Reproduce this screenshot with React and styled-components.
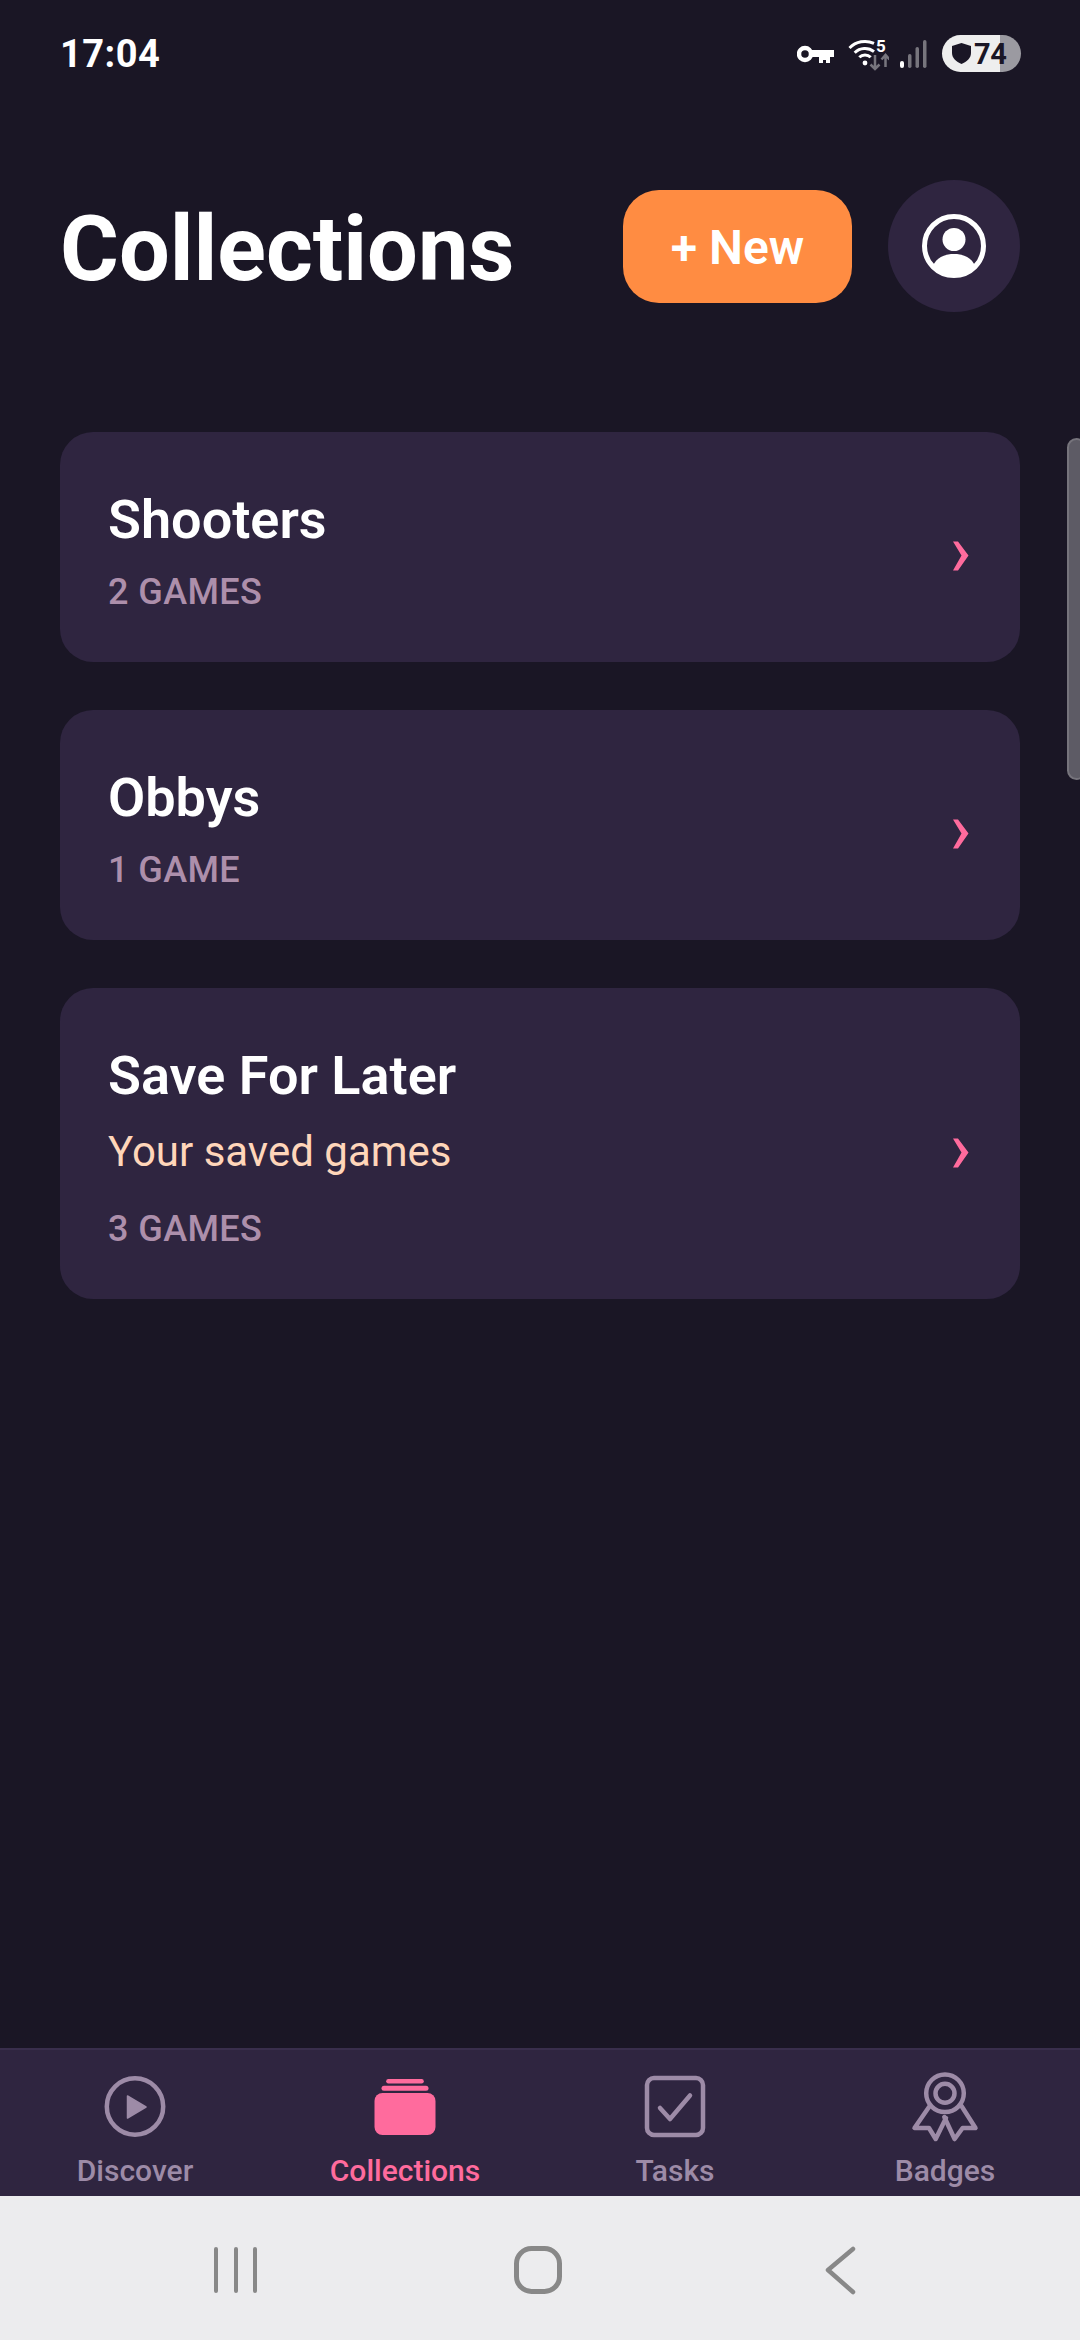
import React from 'react';
import styled, { createGlobalStyle } from 'styled-components';

const Global = createGlobalStyle`
  html, body { margin: 0; padding: 0; background: #1a1625; }
  * { box-sizing: border-box; }
`;

const Page = styled.div`
  position: relative;
  width: 1080px;
  height: 2340px;
  overflow: hidden;
  display: flex;
  flex-direction: column;
  background: #1a1625;
  font-family: Roboto, "Liberation Sans", sans-serif;
  color: #fff;
`;

const StatusBar = styled.div`
  height: 108px;
  padding: 35px 59px 0 60px;
  display: flex;
  justify-content: space-between;
  align-items: flex-start;
`;

const Time = styled.div`
  font-size: 38px;
  line-height: 38px;
  font-weight: 700;
  letter-spacing: 0.5px;
`;

const StatusIcons = styled.div`
  display: flex;
  align-items: center;
  height: 37px;
`;

const StatusIcon = styled.svg`
  display: block;
  flex: none;
  margin-left: ${p => p.$ml || 0}px;
  margin-right: ${p => p.$mr || 0}px;
`;

const Battery = styled.div`
  width: 79px;
  height: 37px;
  margin-left: 15px;
  border-radius: 18.5px;
  background: linear-gradient(to right, #eeeeee 0 58px, #9b9aa1 58px);
  color: #1a1625;
  display: flex;
  align-items: center;
  padding-left: 10px;
  gap: 3px;
  font-size: 29px;
  font-weight: 700;
  letter-spacing: -0.5px;
`;

const Header = styled.header`
  height: 132px;
  margin-top: 72px;
  padding: 0 60px;
  display: flex;
  align-items: center;
`;

const Title = styled.h1`
  flex: 1;
  margin: 7px 0 0;
  font-size: 90px;
  line-height: 100px;
  font-weight: 700;
`;

const NewButton = styled.button`
  width: 229px;
  height: 113px;
  padding: 2px 0 0;
  border: 0;
  border-radius: 36px;
  background: #ff8c42;
  color: #fff;
  font-family: inherit;
  font-size: 48px;
  font-weight: 600;
`;

const Avatar = styled.div`
  width: 132px;
  height: 132px;
  margin-left: 36px;
  border-radius: 50%;
  background: #2f2540;
  display: flex;
  align-items: center;
  justify-content: center;
`;

const List = styled.main`
  flex: 1;
  padding: 120px 60px 0;
  display: flex;
  flex-direction: column;
  gap: 48px;
`;

const Card = styled.div`
  height: ${p => p.$h}px;
  padding: 8px 48px 0;
  border-radius: 33px;
  background: #2f2540;
  display: flex;
  align-items: center;
  justify-content: space-between;
`;

const CardText = styled.div`
  display: flex;
  flex-direction: column;
`;

const CardTitle = styled.div`
  font-size: 54px;
  line-height: 60px;
  font-weight: 600;
`;

const CardDesc = styled.div`
  margin-top: 21px;
  font-size: 42px;
  line-height: 50px;
  color: #ffd6ba;
`;

const CardCount = styled.div`
  margin-top: ${p => p.$mt}px;
  font-size: 36px;
  line-height: 42px;
  font-weight: 500;
  letter-spacing: 0.4px;
  color: #ad8fab;
`;

const CardChevron = styled.svg`
  flex: none;
  margin: 10px 3px 0 0;
`;

const ScrollThumb = styled.div`
  position: absolute;
  top: 438px;
  right: -6px;
  width: 19px;
  height: 342px;
  border-radius: 12px;
  background: #5d5b65;
  border: 2px solid #76747c;
`;

const TabBar = styled.nav`
  height: 148px;
  background: #2f2540;
  border-top: 2px solid #392e4c;
  display: grid;
  grid-template-columns: repeat(4, 1fr);
`;

const Tab = styled.div`
  display: flex;
  flex-direction: column;
  align-items: center;
  color: ${p => (p.$active ? '#ff6b9d' : '#9d8ba7')};
`;

const TabIcon = styled.svg`
  display: block;
  width: 80px;
  height: 80px;
  margin-top: 16px;
`;

const TabLabel = styled.div`
  margin-top: 7px;
  font-size: 30px;
  line-height: 36px;
  font-weight: 500;
  white-space: nowrap;
`;

const SystemBar = styled.div`
  height: 144px;
  background: #ececee;
`;

const SystemIcons = styled.svg`
  display: block;
  width: 1080px;
  height: 144px;
`;

const Chevron = () => (
  <CardChevron width="16" height="30" viewBox="0 0 16 30">
    <polygon points="0,0.5 5,0.5 15.5,14.5 5,29.5 0,29.5 8.5,14.5" fill="#ff6b9d" />
  </CardChevron>
);

const cards = [
  { title: 'Shooters', count: '2 GAMES', h: 230, mt: 21 },
  { title: 'Obbys', count: '1 GAME', h: 230, mt: 21 },
  { title: 'Save For Later', desc: 'Your saved games', count: '3 GAMES', h: 311, mt: 31 },
];

export default function App() {
  return (
    <Page>
      <Global />
      <StatusBar>
        <Time>17:04</Time>
        <StatusIcons>
          <StatusIcon width="37" height="20" viewBox="0 0 37 20" fill="none">
            <circle cx="8" cy="10" r="6" stroke="#fff" strokeWidth="4.500" />
            <path d="M14 6h23v7h-4v6h-4v-3h-3v3h-4v-6H14z" fill="#fff" />
          </StatusIcon>
          <StatusIcon $ml={14} $mr={-4} width="41" height="34" viewBox="0 0 41 34" fill="none">
            <path d="M1.500 11A21.600 21.600 0 0 1 26 6.400" stroke="#fff" strokeWidth="3" />
            <path d="M6.700 15.700A14.500 14.500 0 0 1 26 14.600" stroke="#fff" strokeWidth="3" />
            <path d="M11.300 20.300A8 8 0 0 1 22.700 20.300" stroke="#fff" strokeWidth="3" />
            <circle cx="17" cy="26" r="2.400" fill="#fff" />
            <text x="28" y="14.500" fontFamily="Roboto, sans-serif" fontSize="17" fontWeight="700" fill="#fff">5</text>
            <path d="M27 18v14M22.500 27.500l4.500 4.500 4.500-4.500" stroke="#77757d" strokeWidth="2.500" />
            <path d="M37.500 30V18M33.500 22.500l4-4.500 4 4.500" stroke="#77757d" strokeWidth="2.500" />
          </StatusIcon>
          <StatusIcon $ml={15} width="27" height="30" viewBox="0 0 27 30">
            <rect x="0" y="22" width="4" height="7" rx="2" fill="#fff" />
            <rect x="8" y="15" width="3.500" height="14" rx="1.700" fill="#77757d" />
            <rect x="15.500" y="8" width="3.500" height="21" rx="1.700" fill="#77757d" />
            <rect x="23" y="1" width="3.500" height="28" rx="1.700" fill="#77757d" />
          </StatusIcon>
          <Battery>
            <svg width="19" height="21" viewBox="0 0 19 21" style={{ flex: 'none' }}>
              <path d="M9.500 0L19 3v7c0 5-4 8.500-9.500 11C4 18.500 0 15 0 10V3z" fill="#1a1625" />
            </svg>
            74
          </Battery>
        </StatusIcons>
      </StatusBar>

      <Header>
        <Title>Collections</Title>
        <NewButton>+ New</NewButton>
        <Avatar>
          <svg width="64" height="64" viewBox="0 0 64 64" fill="none">
            <circle cx="32" cy="32" r="29.500" stroke="#fff" strokeWidth="5" />
            <circle cx="32" cy="25.500" r="11.500" fill="#fff" />
            <path d="M11 52c3-8 11-12 21-12s18 4 21 12c-5 6-13 10-21 10s-16-4-21-10z" fill="#fff" />
          </svg>
        </Avatar>
      </Header>

      <List>
        {cards.map(c => (
          <Card key={c.title} $h={c.h}>
            <CardText>
              <CardTitle>{c.title}</CardTitle>
              {c.desc && <CardDesc>{c.desc}</CardDesc>}
              <CardCount $mt={c.mt}>{c.count}</CardCount>
            </CardText>
            <Chevron />
          </Card>
        ))}
      </List>
      <ScrollThumb />

      <TabBar>
        <Tab>
          <TabIcon viewBox="0 0 80 80" fill="none">
            <circle cx="40" cy="40.500" r="28.200" stroke="currentColor" strokeWidth="4.500" />
            <path d="M32.500 30L51 41 32.500 52z" fill="currentColor" stroke="currentColor" strokeWidth="1.500" strokeLinejoin="round" />
          </TabIcon>
          <TabLabel>Discover</TabLabel>
        </Tab>
        <Tab $active>
          <TabIcon viewBox="0 0 80 80" fill="currentColor">
            <rect x="9.500" y="27" width="61" height="42" rx="8" />
            <rect x="16.500" y="19.700" width="47" height="5" rx="2.500" />
            <rect x="21.200" y="13" width="37.600" height="4.400" rx="2.200" />
          </TabIcon>
          <TabLabel>Collections</TabLabel>
        </Tab>
        <Tab>
          <TabIcon viewBox="0 0 80 80" fill="none">
            <rect x="12" y="12" width="56" height="57" rx="7" stroke="currentColor" strokeWidth="4.500" />
            <path d="M25 42l10 11L55 29.500" stroke="currentColor" strokeWidth="4.500" strokeLinecap="round" strokeLinejoin="round" />
          </TabIcon>
          <TabLabel>Tasks</TabLabel>
        </Tab>
        <Tab>
          <TabIcon viewBox="0 0 80 80" fill="none" stroke="currentColor" strokeWidth="4.500" strokeLinejoin="round" strokeLinecap="round">
            <circle cx="40" cy="27.300" r="18.800" />
            <circle cx="40" cy="27.300" r="9.500" />
            <path d="M24 41L9.500 62H24l6.700 11L41 52" />
            <path d="M56.500 40L70.500 62H57.600l-8 11L39.300 51" />
          </TabIcon>
          <TabLabel>Badges</TabLabel>
        </Tab>
      </TabBar>

      <SystemBar>
        <SystemIcons viewBox="0 0 1080 144" fill="none" stroke="#888888" strokeWidth="4" strokeLinecap="round" strokeLinejoin="round">
          <path d="M216 53v42M236 53v42M255 53v42" />
          <rect x="516.500" y="52.500" width="43" height="43" rx="15" strokeWidth="5" />
          <path d="M853 53l-25 21 25 22" strokeWidth="4.500" />
        </SystemIcons>
      </SystemBar>
    </Page>
  );
}
